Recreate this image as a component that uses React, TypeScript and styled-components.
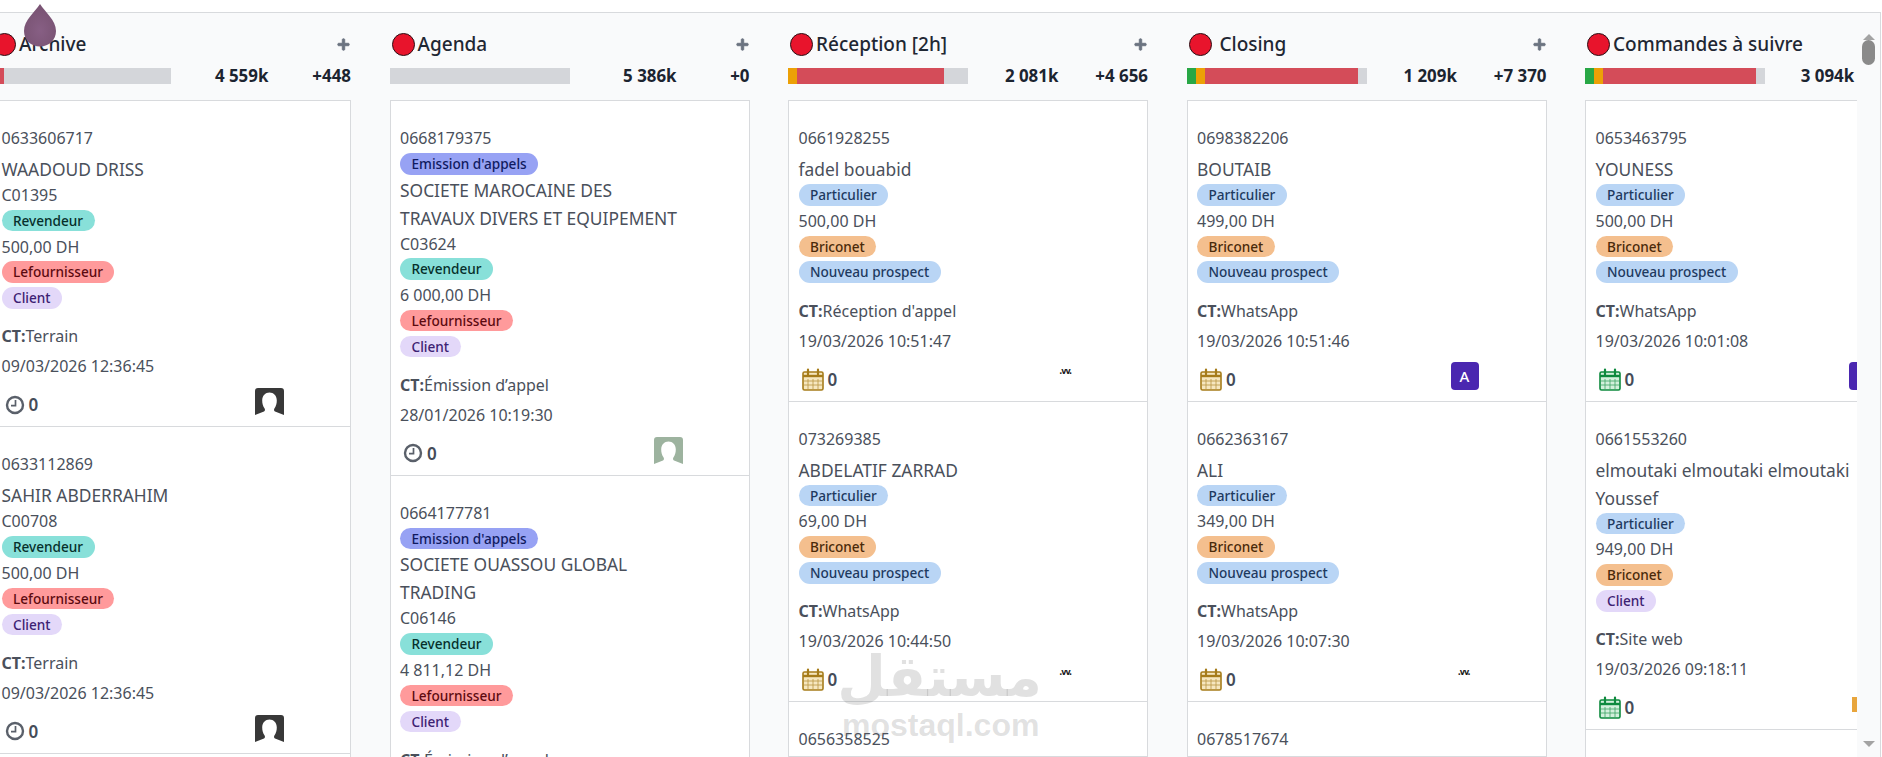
import React from "react";
import styled, { createGlobalStyle } from "styled-components";
import { FaPlus } from "react-icons/fa";

const Global = createGlobalStyle`
  html, body { margin: 0; padding: 0; height: 100%; overflow: hidden; background: #fff; }
  body { font-family: "Noto Sans", "Open Sans", sans-serif; color: #4a505b; }
  #root { height: 100%; }
`;

const Page = styled.div`
  position: relative;
  width: 1882px;
  height: 757px;
  padding-top: 12px;
  box-sizing: border-box;
  overflow: hidden;
  background: #fff;
`;
const Frame = styled.div`
  display: flex;
  width: 1881px;
  height: 745px;
  box-sizing: border-box;
  border-top: 1px solid #d8dadd;
  border-right: 1px solid #d8dadd;
  background: #f9fafb;
`;
const Board = styled.div`
  display: flex;
  flex: none;
  width: 1857px;
  gap: 38.5px;
  overflow: hidden;
  background: #f9fafb;
`;
const Column = styled.section`
  display: flex;
  flex-direction: column;
  flex: none;
  width: 360px;
  &:first-child { margin-left: -9px; }
`;
const Header = styled.header`
  display: flex;
  align-items: center;
  height: 24px;
  margin-top: 19px;
  padding: 0 2px;
`;
const Dot = styled.span`
  flex: none;
  width: 23px;
  height: 23px;
  box-sizing: border-box;
  border-radius: 50%;
  background: #e8142c;
  border: 1.5px solid #2a1015;
  margin-right: 3px;
`;
const Title = styled.h2`
  flex: 1;
  margin: 0;
  font-size: 19px;
  line-height: 24px;
  font-weight: 500;
  color: #1f2733;
  white-space: pre;
`;
const AddIcon = styled(FaPlus)`
  flex: none;
  width: 13px;
  height: 13px;
  color: #6b7380;
  stroke: currentColor;
  stroke-width: 36;
  overflow: visible;
  margin-right: -1px;
`;
const Stats = styled.div`
  display: flex;
  align-items: center;
  justify-content: space-between;
  height: 16px;
  margin: 12px 0 16px;
`;
const Bar = styled.div`
  display: flex;
  flex: none;
  width: 180px;
  height: 16px;
  background: #d4d6da;
`;
const Seg = styled.span<{ $c: string; $w: number }>`
  flex: none;
  width: ${(p) => p.$w}px;
  background: ${(p) => p.$c};
`;
const Stat = styled.b`
  font-size: 16.9px;
  font-weight: 700;
  color: #1c2430;
  line-height: 16px;
  white-space: nowrap;
  &:empty { width: 55px; }
`;
const List = styled.div`
  flex: 1;
  background: #fff;
  border: 1px solid #d8dadd;
  border-bottom: 0;
`;
const Card = styled.article`
  padding: 25px 0 0 9.5px;
  border-bottom: 1px solid #d8dadd;
  font-size: 16px;
`;
const Line = styled.div`
  line-height: 25.8px;
  height: 25.8px;
  white-space: nowrap;
`;
const Phone = styled.div<{ $tight: boolean }>`
  line-height: 25px;
  height: 25px;
  margin-bottom: ${(p) => (p.$tight ? 0 : 4)}px;
`;
const Name = styled.div`
  line-height: 28px;
  font-size: 17.4px;
  white-space: nowrap;
`;
const TagRow = styled.div<{ $lead: boolean }>`
  height: 25.8px;
  box-sizing: border-box;
  margin-top: ${(p) => (p.$lead ? 1 : 0)}px;
  margin-bottom: ${(p) => (p.$lead ? -2.3 : 0)}px;
`;
const Tag = styled.span<{ $bg: string; $fg: string }>`
  display: inline-block;
  height: 21.5px;
  line-height: 21px;
  padding: 0 11.5px;
  border-radius: 11px;
  background: ${(p) => p.$bg};
  color: ${(p) => p.$fg};
  font-size: 13.6px;
  font-weight: 500;
  white-space: nowrap;
`;
const Spec = styled.div`
  margin-top: 9.5px;
  line-height: 30px;
  height: 30px;
  white-space: nowrap;
`;
const SpecDate = styled.div`
  line-height: 30px;
  height: 30px;
  white-space: nowrap;
`;
const Bold = styled.b`
  font-weight: 700;
`;
const Footer = styled.footer`
  display: flex;
  align-items: center;
  justify-content: space-between;
  height: 45px;
  box-sizing: border-box;
  padding: 2px 66px 0 3px;
`;
const Count = styled.span`
  display: flex;
  align-items: center;
  gap: 4px;
  font-size: 17px;
  font-weight: 600;
  color: #454c58;
`;
const Sq = styled.span`
  display: flex;
  align-items: center;
  justify-content: center;
  width: 28px;
  height: 28px;
  margin: -6px 1px 0 0;
  border-radius: 4px;
  background: #4a27b0;
  color: #fff;
  font-size: 15px;
  font-weight: 500;
`;
const AvatarBox = styled.span`
  display: flex;
  margin-top: -6px;
`;
const Tiny = styled.span`
  font-family: "DejaVu Sans", sans-serif;
  font-size: 8px;
  font-weight: 700;
  letter-spacing: -1px;
  line-height: 8px;
  color: #1a1a1a;
  margin: -14px 10px 0 0;
`;
const Rail = styled.div`
  position: relative;
  flex: 1;
  background: #f9fafb;
`;
const ArrowUp = styled.span`
  position: absolute;
  top: 21px;
  left: 6px;
  width: 0;
  height: 0;
  border-left: 6px solid transparent;
  border-right: 6px solid transparent;
  border-bottom: 6px solid #a3a3a3;
`;
const ArrowDown = styled.span`
  position: absolute;
  bottom: 10px;
  left: 6px;
  width: 0;
  height: 0;
  border-left: 6px solid transparent;
  border-right: 6px solid transparent;
  border-top: 6px solid #a3a3a3;
`;
const Thumb = styled.span`
  position: absolute;
  top: 27px;
  left: 5px;
  width: 13px;
  height: 25px;
  border-radius: 7px;
  background: #8a8a8a;
`;
const Drop = styled.svg`
  position: absolute;
  left: 23px;
  top: 4px;
  width: 34px;
  height: 43px;
`;
const Mark = styled.div`
  position: absolute;
  left: 842px;
  top: 638px;
  width: 196px;
  text-align: center;
  color: rgba(105, 105, 105, 0.2);
  pointer-events: none;
`;
const MarkAr = styled.div`
  font-family: "DejaVu Sans", sans-serif;
  font-weight: 700;
  font-size: 56px;
  line-height: 78px;
  white-space: nowrap;
  direction: rtl;
  margin-right: -4px;
`;
const MarkEn = styled.div`
  font-family: "Liberation Sans", sans-serif;
  font-weight: 700;
  font-size: 32px;
  line-height: 26px;
  margin-top: -4px;
  white-space: nowrap;
`;
const OrangeEdge = styled.span`
  width: 26px;
  height: 15px;
  margin: -6px 0 0 0;
  border-left: 5px solid #e8a53c;
  box-sizing: border-box;
`;

const Clock = () => (
  <svg width="20" height="20" viewBox="0 0 20 20">
    <circle cx="10" cy="10" r="8" fill="none" stroke="#5a606a" strokeWidth="2.4" />
    <path d="M10.5 5v5.6H6" fill="none" stroke="#5a606a" strokeWidth="1.7" />
  </svg>
);
const Cal = ({ c, f }: { c: string; f: string }) => (
  <svg width="22" height="23" viewBox="0 0 22 23">
    <rect x="1" y="4" width="20" height="18" rx="1.5" fill={f} stroke={c} strokeWidth="1.6" />
    <path d="M1 8h20" stroke={c} strokeWidth="2.4" />
    <path d="M6 11v10M11 11v10M16 11v10M2 13h18M2 17h18" stroke={c} strokeWidth=".8" opacity=".75" />
    <path d="M6 1.5v5M16 1.5v5" stroke={c} strokeWidth="2.2" strokeLinecap="round" />
  </svg>
);
const Avatar = ({ c }: { c: string }) => (
  <AvatarBox>
    <svg width="29" height="27" viewBox="0 0 29 27">
      <path
        d="M3 0h23a3 3 0 0 1 3 3v24l-9-3.4c-1-.5-1.300-2-.6-3 1.600-2.200 2.400-5 2.400-8C21.800 7.500 18.600 4.500 14.500 4.500S7.200 7.500 7.200 12.600c0 3 .8 5.800 2.400 8 .7 1 .4 2.500-.6 3L0 27V3a3 3 0 0 1 3-3z"
        fill={c}
      />
    </svg>
  </AvatarBox>
);

const TAGS: Record<string, [string, string]> = {
  Revendeur: ["#88e0d9", "#062f2b"],
  Lefournisseur: ["#ff9a9b", "#5c0a10"],
  Client: ["#e3d8f9", "#3d2273"],
  Particulier: ["#b9d5f5", "#1e3a5f"],
  Briconet: ["#f4bf8e", "#4a2a0a"],
  "Nouveau prospect": ["#b9d5f5", "#1e3a5f"],
  "Emission d'appels": ["#97a2f4", "#101a60"],
};

type Row = { k: "t"; v: string } | { k: "p"; v: string } | { k: "n"; v: string[] };
const t = (v: string): Row => ({ k: "t", v });
const p = (v: string): Row => ({ k: "p", v });
const n = (...v: string[]): Row => ({ k: "n", v });

type Who = "black" | "sage" | "tiny" | "A" | "orange";
type Item = {
  phone: string;
  rows: Row[];
  ct?: string;
  date?: string;
  icon?: "clock" | "gold" | "green";
  who?: Who;
};

const prospect = (name: string, amount: string, ct: string, date: string, icon: "gold" | "green", who: Who): Item => ({
  phone: "",
  rows: [n(name), t("Particulier"), p(amount), t("Briconet"), t("Nouveau prospect")],
  ct,
  date,
  icon,
  who,
});

const COLS: {
  title: string;
  segs: [string, number][];
  total: string;
  plus: string;
  items: Item[];
}[] = [
  {
    title: "Archive",
    segs: [["#d44c59", 12.5]],
    total: "4 559k",
    plus: "+448",
    items: [
      { phone: "0633606717", rows: [n("WAADOUD DRISS"), p("C01395"), t("Revendeur"), p("500,00 DH"), t("Lefournisseur"), t("Client")], ct: "Terrain", date: "09/03/2026 12:36:45", icon: "clock", who: "black" },
      { phone: "0633112869", rows: [n("SAHIR ABDERRAHIM"), p("C00708"), t("Revendeur"), p("500,00 DH"), t("Lefournisseur"), t("Client")], ct: "Terrain", date: "09/03/2026 12:36:45", icon: "clock", who: "black" },
    ],
  },
  {
    title: "Agenda",
    segs: [],
    total: "5 386k",
    plus: "+0",
    items: [
      { phone: "0668179375", rows: [t("Emission d'appels"), n("SOCIETE MAROCAINE DES", "TRAVAUX DIVERS ET EQUIPEMENT"), p("C03624"), t("Revendeur"), p("6 000,00 DH"), t("Lefournisseur"), t("Client")], ct: "Émission d’appel", date: "28/01/2026 10:19:30", icon: "clock", who: "sage" },
      { phone: "0664177781", rows: [t("Emission d'appels"), n("SOCIETE OUASSOU GLOBAL", "TRADING"), p("C06146"), t("Revendeur"), p("4 811,12 DH"), t("Lefournisseur"), t("Client")], ct: "Émission d’appel" },
    ],
  },
  {
    title: "Réception [2h]",
    segs: [["#eca006", 9], ["#d44c59", 147]],
    total: "2 081k",
    plus: "+4 656",
    items: [
      { ...prospect("fadel bouabid", "500,00 DH", "Réception d'appel", "19/03/2026 10:51:47", "gold", "tiny"), phone: "0661928255" },
      { ...prospect("ABDELATIF ZARRAD", "69,00 DH", "WhatsApp", "19/03/2026 10:44:50", "gold", "tiny"), phone: "073269385" },
      { phone: "0656358525", rows: [] },
    ],
  },
  {
    title: " Closing",
    segs: [["#28a745", 9], ["#eca006", 9], ["#d44c59", 153]],
    total: "1 209k",
    plus: "+7 370",
    items: [
      { ...prospect("BOUTAIB", "499,00 DH", "WhatsApp", "19/03/2026 10:51:46", "gold", "A"), phone: "0698382206" },
      { ...prospect("ALI", "349,00 DH", "WhatsApp", "19/03/2026 10:07:30", "gold", "tiny"), phone: "0662363167" },
      { phone: "0678517674", rows: [] },
    ],
  },
  {
    title: "Commandes à suivre",
    segs: [["#28a745", 9], ["#eca006", 9], ["#d44c59", 153]],
    total: "3 094k",
    plus: "",
    items: [
      { ...prospect("YOUNESS", "500,00 DH", "WhatsApp", "19/03/2026 10:01:08", "green", "A"), phone: "0653463795" },
      { phone: "0661553260", rows: [n("elmoutaki elmoutaki elmoutaki", "Youssef"), t("Particulier"), p("949,00 DH"), t("Briconet"), t("Client")], ct: "Site web", date: "19/03/2026 09:18:11", icon: "green", who: "orange" },
    ],
  },
];

const Who_ = ({ w }: { w?: Who }) => {
  if (w === "black") return <Avatar c="#383838" />;
  if (w === "sage") return <Avatar c="#9db39f" />;
  if (w === "A") return <Sq>A</Sq>;
  if (w === "tiny") return <Tiny>.vv.</Tiny>;
  if (w === "orange") return <OrangeEdge />;
  return null;
};

const CardView = ({ item }: { item: Item }) => (
  <Card>
    <Phone $tight={item.rows[0]?.k === "t"}>{item.phone}</Phone>
    {item.rows.map((r, i) => {
      if (r.k === "t") {
        const [bg, fg] = TAGS[r.v];
        return (
          <TagRow key={i} $lead={i === 0}>
            <Tag $bg={bg} $fg={fg}>{r.v}</Tag>
          </TagRow>
        );
      }
      if (r.k === "p") return <Line key={i}>{r.v}</Line>;
      return (
        <Name key={i}>
          {r.v.map((s) => (
            <div key={s}>{s}</div>
          ))}
        </Name>
      );
    })}
    {item.ct && (
      <Spec>
        <Bold>CT:</Bold>
        {item.ct}
      </Spec>
    )}
    {item.date && <SpecDate>{item.date}</SpecDate>}
    {item.icon && (
      <Footer>
        <Count>
          {item.icon === "clock" && <Clock />}
          {item.icon === "gold" && <Cal c="#a67c1a" f="#f6e7bf" />}
          {item.icon === "green" && <Cal c="#0e8a3e" f="#d3f0dc" />}
          0
        </Count>
        <Who_ w={item.who} />
      </Footer>
    )}
  </Card>
);

export default function App() {
  return (
    <Page>
      <Global />
      <Frame>
        <Board>
          {COLS.map((c) => (
            <Column key={c.title}>
              <Header>
                <Dot />
                <Title>{c.title}</Title>
                <AddIcon />
              </Header>
              <Stats>
                <Bar>
                  {c.segs.map(([col, w], i) => (
                    <Seg key={i} $c={col} $w={w} />
                  ))}
                </Bar>
                <Stat>{c.total}</Stat>
                <Stat>{c.plus}</Stat>
              </Stats>
              <List>
                {c.items.map((it) => (
                  <CardView key={it.phone} item={it} />
                ))}
              </List>
            </Column>
          ))}
        </Board>
        <Rail>
          <ArrowUp />
          <Thumb />
          <ArrowDown />
        </Rail>
      </Frame>
      <Drop viewBox="0 0 34 43">
        <defs>
          <radialGradient id="dropFill" cx="50%" cy="62%" r="60%">
            <stop offset="0%" stopColor="#875f84" />
            <stop offset="100%" stopColor="#785272" />
          </radialGradient>
        </defs>
        <path d="M17 0C22 8 33 16 33 27c0 9-7 15.5-16 15.5S1 36 1 27C1 16 12 8 17 0z" fill="url(#dropFill)" />
      </Drop>
      <Mark>
        <MarkAr>مستقل</MarkAr>
        <MarkEn>mostaql.com</MarkEn>
      </Mark>
    </Page>
  );
}
